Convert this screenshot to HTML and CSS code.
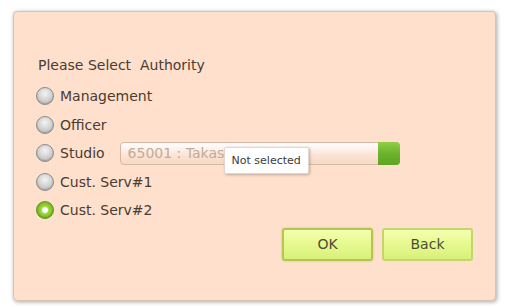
FILE: index.html
```html
<!DOCTYPE html>
<html lang="en">
<head>
  <meta charset="UTF-8">
  <title>Select Authority</title>
  <link rel="stylesheet" href="styles.css">
</head>
<body>
  <div class="panel">
    <p class="title">Please Select&nbsp; Authority</p>

    <div class="options">
      <label class="option"><span class="radio"></span>Management</label>
      <label class="option"><span class="radio"></span>Officer</label>
      <div class="option">
        <span class="radio"></span>Studio
        <div class="select">
          <span class="select-text">65001 : Takas</span>
          <span class="select-btn"></span>
          <div class="tooltip">Not selected</div>
        </div>
      </div>
      <label class="option"><span class="radio"></span>Cust. Serv#1</label>
      <label class="option"><span class="radio on"></span>Cust. Serv#2</label>
    </div>

    <div class="actions">
      <button class="btn ok">OK</button>
      <button class="btn">Back</button>
    </div>
  </div>
</body>
</html>
```

FILE: styles.css
```css
body {
  margin: 0;
  padding: 11px 9px 5px 13px;
  background: #ffffff;
  font-family: "DejaVu Sans", Verdana, sans-serif;
  color: #4b3b31;
}
.panel {
  height: 290px;
  box-sizing: border-box;
  background: #fee0cd;
  border: 1px solid #d9c2b2;
  border-radius: 4px;
  box-shadow: 1px 1px 4px rgba(0, 0, 0, 0.35);
  padding: 45px 22px 0 22px;
}
.title {
  margin: 0 0 9px 2px;
  font-size: 14px;
}
.options {
  display: flex;
  flex-direction: column;
}
.option {
  display: flex;
  align-items: center;
  height: 28.5px;
  font-size: 14px;
}
.radio {
  width: 18px;
  height: 18px;
  margin-right: 6px;
  box-sizing: border-box;
  border-radius: 50%;
  border: 1px solid #8c8a88;
  background: radial-gradient(circle at 50% 35%, #f4f4f4 0%, #cfcfcf 55%, #a9a9a9 100%);
  box-shadow: inset 0 -1px 1px rgba(0, 0, 0, 0.15);
}
.radio.on {
  border-color: #5c9a1c;
  background: radial-gradient(circle at 50% 50%, #ffffff 0%, #ffffff 22%, #a8d83e 32%, #6eb322 75%, #58981a 100%);
}
.select {
  position: relative;
  display: flex;
  width: 280px;
  height: 23px;
  margin-left: 15px;
  box-sizing: border-box;
  border: 1px solid #d7b8a3;
  border-radius: 4px;
  background: linear-gradient(#ffffff, #fbe3d4 60%, #f6d8c5);
}
.select-text {
  flex: 1;
  padding-left: 7px;
  line-height: 21px;
  color: #c4aa98;
  font-size: 14px;
  overflow: hidden;
  white-space: nowrap;
}
.select-btn {
  width: 22px;
  margin: -1px -1px -1px 0;
  border-radius: 0 4px 4px 0;
  background: linear-gradient(#8fd047, #6cb32c 50%, #5ea423);
}
.tooltip {
  position: absolute;
  left: 103px;
  top: 4px;
  padding: 6px 7px;
  background: #ffffff;
  border: 1px solid #e2d6cd;
  border-radius: 2px;
  box-shadow: 1px 1px 3px rgba(0, 0, 0, 0.25);
  font-size: 11px;
  color: #3b3b3b;
  white-space: nowrap;
}
.actions {
  display: flex;
  justify-content: flex-end;
  gap: 9px;
  margin-top: 3px;
}
.btn {
  width: 91px;
  height: 33px;
  border: 2px solid #c3d66a;
  border-radius: 3px;
  background: linear-gradient(#f4ffb0, #e5f98e 50%, #d9f07a);
  font-family: "DejaVu Sans", Verdana, sans-serif;
  font-size: 14px;
  color: #4d4d36;
}
.btn.ok {
  border-color: #b3c650;
  box-shadow: 0 0 2px #b6c95a;
}
```
